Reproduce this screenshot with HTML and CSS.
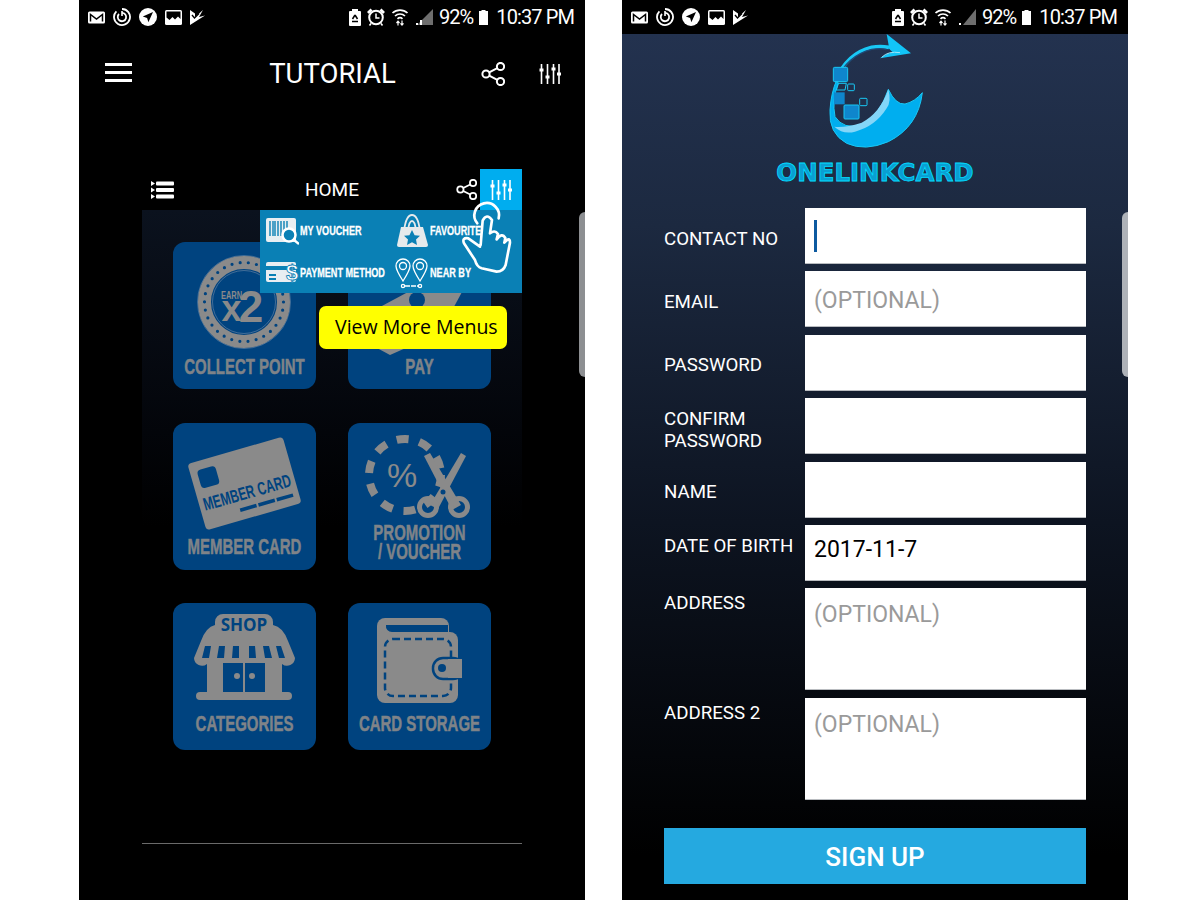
FILE: index.html
```html
<!DOCTYPE html>
<html lang="en">

<head>
    <meta charset="UTF-8">
    <meta name="viewport" content="width=device-width, initial-scale=1.0">
    <title>OneLinkCard</title>
    <link rel="stylesheet" href="styles.css">
</head>

<body>
    <svg class="defs" width="0" height="0">
        <symbol id="st-mail" viewBox="0 0 17 13">
            <rect x="0" y="0.5" width="17" height="12" rx="1.5" fill="#fff" />
            <path d="M2.5 10.5V3.5l6 4.5 6-4.5v7" fill="none" stroke="#000" stroke-width="1.5" />
        </symbol>
        <symbol id="st-ring" viewBox="0 0 18 18">
            <path d="M9 1a8 8 0 1 1-5.6 2.3" fill="none" stroke="#fff" stroke-width="1.8" />
            <path d="M9 4.8a4.2 4.2 0 1 1-3 1.2" fill="none" stroke="#fff" stroke-width="1.8" />
            <path d="M9 3v5" stroke="#fff" stroke-width="1.6" />
        </symbol>
        <symbol id="st-nav" viewBox="0 0 18 18">
            <circle cx="9" cy="9" r="9" fill="#fff" />
            <path d="M14 4 3.8 8.6l4.3 1.3 1.3 4.3z" fill="#000" />
        </symbol>
        <symbol id="st-image" viewBox="0 0 17 15">
            <rect x="0" y="0" width="17" height="15" rx="1.5" fill="#fff" />
            <path d="M1.5 1.5h14v7.5l-2.5-2.5-3 3-2.5-2.5-3 3-3-2.5z" fill="#000" />
        </symbol>
        <symbol id="st-check" viewBox="0 0 15 15">
            <path d="M0 0l5 3.5V7l3-2.5L13 0l-4 7 6-1.5L0 15z" fill="#fff" />
            <path d="M2 5l2.5 3L9 3.500" fill="none" stroke="#000" stroke-width="1.400" />
        </symbol>
        <symbol id="st-recycle" viewBox="0 0 12 17">
            <path d="M3 0h6v2h2a1 1 0 0 1 1 1v13a1 1 0 0 1-1 1H1a1 1 0 0 1-1-1V3a1 1 0 0 1 1-1h2z" fill="#fff" />
            <path d="M6 6 3.500 10M6 6l2.500 4M3 12.500h6" stroke="#000" stroke-width="1.500" fill="none" />
        </symbol>
        <symbol id="st-alarm" viewBox="0 0 18 18">
            <path d="M1 5 4.500 1.500M17 5l-3.500-3.500" stroke="#fff" stroke-width="2.800" />
            <circle cx="9" cy="9.500" r="6.800" fill="#000" stroke="#fff" stroke-width="2" />
            <path d="M9 5.500v4.500h3.500" fill="none" stroke="#fff" stroke-width="1.500" />
            <path d="M4 15.500 2.500 17.500M14 15.500l1.500 2" stroke="#fff" stroke-width="1.600" />
        </symbol>
        <symbol id="st-wifi" viewBox="0 0 18 18">
            <g fill="none" stroke="#fff" stroke-width="1.700">
                <path d="M1.500 5a11 11 0 0 1 15 0" />
                <path d="M4 8a7.200 7.200 0 0 1 10 0" />
                <path d="M6.500 10.800a3.600 3.600 0 0 1 5 0" />
            </g>
            <path d="M7 17.500v-4M5.500 15 7 13.200 8.500 15M11 12.500v4.500M9.500 15.300 11 17l1.500-1.700" fill="none" stroke="#fff" stroke-width="1.200" />
        </symbol>
        <symbol id="st-signal" viewBox="0 0 18 16">
            <path d="M18 0v16H2z" fill="#6e6e6e" />
            <path d="M1 16v-2h2v2zM5 16v-5h2v5z" fill="#fff" />
        </symbol>
        <symbol id="st-signal-off" viewBox="0 0 18 16">
            <path d="M18 0v16H5z" fill="#6e6e6e" />
            <path d="M1 16v-2h2v2z" fill="#fff" />
        </symbol>
        <symbol id="st-battery" viewBox="0 0 9 15">
            <path d="M2.500 0h4v1H9v14H0V1h2.500z" fill="#fff" />
        </symbol>
    </svg>

    <main class="page">
        <section class="phone phone-dark">
            <div class="status-bar">
                <div class="status-left">
                    <svg class="st-17"><use href="#st-mail" /></svg>
                    <svg class="st-18"><use href="#st-ring" /></svg>
                    <svg class="st-18"><use href="#st-nav" /></svg>
                    <svg class="st-17"><use href="#st-image" /></svg>
                    <svg class="st-15"><use href="#st-check" /></svg>
                </div>
                <div class="status-right">
                    <svg class="st-12"><use href="#st-recycle" /></svg>
                    <svg class="st-18"><use href="#st-alarm" /></svg>
                    <svg class="st-18"><use href="#st-wifi" /></svg>
                    <svg class="st-18"><use href="#st-signal" /></svg>
                    <span class="st-text">92%</span>
                    <svg class="st-9"><use href="#st-battery" /></svg>
                    <span class="st-text st-time">10:37 PM</span>
                </div>
            </div>

            <header class="top-bar">
                <div class="hamburger"><i></i><i></i><i></i></div>
                <h1 class="top-title">TUTORIAL</h1>
                <div class="top-actions">
                    <svg class="share-icon" viewBox="0 0 24 24">
                        <circle cx="5" cy="12" r="3.600" />
                        <circle cx="19.500" cy="4.500" r="3.600" />
                        <circle cx="19.500" cy="19.500" r="3.600" />
                        <path d="M8.200 10.300 16.300 6.200M8.200 13.700l8.100 4.100" />
                    </svg>
                    <svg class="sliders-icon" viewBox="0 0 22 20">
                        <path d="M2.500 0v20M8.500 0v20M14.500 0v20M20 0v20" />
                        <path class="knob" d="M.5 6h4M6.500 13h4M12.500 5h4M18 10h4" />
                    </svg>
                </div>
            </header>

            <div class="demo">
                <div class="demo-head">
                    <svg class="list-icon" viewBox="0 0 23 18">
                        <path d="M0 0l4 2.500L0 5zM0 6.500l4 2.500-4 2.500zM0 13l4 2.500L0 18z" fill="#fff" />
                        <rect x="5" y="0.500" width="18" height="4" rx="1" fill="#fff" />
                        <rect x="5" y="7" width="18" height="4" rx="1" fill="#fff" />
                        <rect x="5" y="13.500" width="18" height="4" rx="1" fill="#fff" />
                    </svg>
                    <div class="demo-title">HOME</div>
                    <div class="demo-actions">
                        <svg class="share-icon share-small" viewBox="0 0 24 24">
                            <circle cx="5" cy="12" r="3.600" />
                            <circle cx="19.500" cy="4.500" r="3.600" />
                            <circle cx="19.500" cy="19.500" r="3.600" />
                            <path d="M8.200 10.300 16.300 6.200M8.200 13.700l8.100 4.100" />
                        </svg>
                        <div class="menu-toggle">
                            <svg class="sliders-icon" viewBox="0 0 22 20">
                                <path d="M2.500 0v20M8.500 0v20M14.500 0v20M20 0v20" />
                                <path class="knob" d="M.5 6h4M6.500 13h4M12.500 5h4M18 10h4" />
                            </svg>
                        </div>
                    </div>
                </div>

                <div class="demo-body">
                    <div class="tiles">
                        <div class="tile">
                            <svg class="tile-icon" viewBox="0 0 143 115">
                                <circle cx="71" cy="60" r="46.500" class="hair" />
                                <circle cx="71" cy="60" r="39.500" class="ring" />
                                <circle cx="71" cy="60" r="39.500" class="ring-dots" />
                                <circle cx="71" cy="60" r="31.500" class="hair" />
                                <text transform="translate(58.500 57) scale(.75 1)" class="earn">EARN</text>
                                <text x="58.500" y="79" class="earn-x">x</text>
                                <text x="78" y="80" class="earn-two">2</text>
                            </svg>
                            <div class="tile-label">COLLECT POINT</div>
                        </div>
                        <div class="tile">
                            <svg class="tile-icon" viewBox="0 0 143 115">
                                <path d="M32 65 60 50h54L95 85l-35 20-18 8-13-7z" class="gray" />
                                <circle cx="69" cy="58" r="8" fill="#00437f" />
                            </svg>
                            <div class="tile-label">PAY</div>
                        </div>
                        <div class="tile">
                            <svg class="tile-icon tile-icon-card" viewBox="0 0 143 114">
                                <g transform="rotate(-16 71.500 60.500)">
                                    <rect x="22" y="26" width="99" height="69" rx="4" class="gray" />
                                    <rect x="29" y="35" width="19" height="19" rx="4" fill="#00437f" />
                                    <text transform="translate(71.500 76) scale(.66 1)" class="card-text">MEMBER CARD</text>
                                    <path d="M60 85h56" stroke="#00437f" stroke-width="3.500" stroke-dasharray="17 2" />
                                </g>
                            </svg>
                            <div class="tile-label">MEMBER CARD</div>
                        </div>
                        <div class="tile">
                            <svg class="tile-icon tile-icon-promo" viewBox="0 0 143 100">
                                <circle cx="57" cy="52" r="36" fill="none" stroke="#8a8a8a" stroke-width="8" stroke-dasharray="12 11" />
                                <text x="54" y="64" class="percent">%</text>
                                <path d="M76 33 82 30 113 82 104 87z" class="gray" />
                                <path d="M113 30 118 33 90 86 82 82z" class="gray" />
                                <circle cx="80" cy="84" r="8.500" fill="none" stroke="#8a8a8a" stroke-width="5" />
                                <circle cx="111" cy="84" r="8.500" fill="none" stroke="#8a8a8a" stroke-width="5" />
                                <circle cx="95" cy="69" r="2.500" fill="#00437f" />
                            </svg>
                            <div class="tile-label">PROMOTION</div>
                            <div class="tile-label">/ VOUCHER</div>
                        </div>
                        <div class="tile">
                            <svg class="tile-icon tile-icon-low" viewBox="0 0 143 111">
                                <path d="M50 11h42a8 8 0 0 1 8 8v3q10 2 15 16l7 17a8 8 0 0 1-13 6v29H34V61a8 8 0 0 1-13-6l7-17q5-14 14-16v-3a8 8 0 0 1 8-8z" class="gray" />
                                <g fill="#00437f">
                                    <path d="M32 43h6l-2 12h-7zM46 43h6l-1 12h-7zM60 43h6v12h-7zM76 43h6l1 12h-7zM90 43h6l3 12h-7zM103 43h5l4 12h-6z" />
                                    <rect x="50" y="60" width="20" height="29" />
                                    <rect x="72" y="60" width="20" height="29" />
                                </g>
                                <circle cx="64" cy="73" r="3" class="gray" />
                                <circle cx="79" cy="73" r="3" class="gray" />
                                <rect x="23" y="89" width="96" height="8" rx="4" class="gray" />
                                <text x="71" y="28" class="shop-text">SHOP</text>
                            </svg>
                            <div class="tile-label">CATEGORIES</div>
                        </div>
                        <div class="tile">
                            <svg class="tile-icon tile-icon-low" viewBox="0 0 143 111">
                                <rect x="29" y="15" width="72" height="40" rx="8" class="gray" />
                                <rect x="29" y="29" width="81" height="71" rx="8" class="gray" />
                                <path d="M38 22h62v7H44a6 6 0 0 1-6-7z" fill="#00437f" />
                                <rect x="37" y="36" width="66" height="57" rx="8" fill="none" stroke="#00437f" stroke-width="2.500" stroke-dasharray="7 4" />
                                <rect x="85" y="55" width="30" height="21" rx="10" class="gray" stroke="#00437f" stroke-width="2.500" />
                                <rect x="100" y="56" width="14" height="19" class="gray" />
                                <circle cx="94" cy="65" r="4" fill="#00437f" />
                            </svg>
                            <div class="tile-label">CARD STORAGE</div>
                        </div>
                    </div>
                </div>

                <div class="more-menu">
                    <div class="more-item">
                        <svg class="more-icon" viewBox="0 0 34 36">
                            <rect x="1" y="5" width="30" height="24" rx="2" fill="#e8eef2" />
                            <path d="M5 8v15M8 8v15M10 8v15M13 8v15M16 8v15M19 8v15M22 8v15" stroke="#0a80b5" stroke-width="1.400" />
                            <circle cx="24" cy="22" r="6.500" fill="#0a80b5" stroke="#fff" stroke-width="2.500" />
                            <path d="M29 27l5 4" stroke="#fff" stroke-width="2.500" />
                        </svg>
                        <span>MY VOUCHER</span>
                    </div>
                    <div class="more-item">
                        <svg class="more-icon" viewBox="0 0 34 36">
                            <path d="M6 14h22l5 18q0 2-2 2H4q-2 0-2-2z" fill="#e6eaec" />
                            <path d="M9 18q2-16 8-16t8 16M13 18q1-10 4-10t4 10" fill="none" stroke="#e6eaec" stroke-width="1.800" />
                            <path d="M17 17l2.600 5.200 5.400.6-4 3.800 1 5.400-5-2.700-5 2.700 1-5.400-4-3.800 5.400-.6z" fill="#0a80b5" />
                        </svg>
                        <span>FAVOURITE</span>
                    </div>
                    <div class="more-item">
                        <svg class="more-icon" viewBox="0 0 34 36">
                            <rect x="1" y="8" width="30" height="20" rx="2" fill="#e8eef2" />
                            <rect x="1" y="12" width="30" height="4" fill="#0a80b5" />
                            <rect x="4" y="20" width="7" height="2" fill="#0a80b5" />
                            <rect x="4" y="24" width="7" height="2" fill="#0a80b5" />
                            <text x="27" y="26" class="dollar">$</text>
                        </svg>
                        <span>PAYMENT METHOD</span>
                    </div>
                    <div class="more-item">
                        <svg class="more-icon" viewBox="0 0 34 36">
                            <g fill="none" stroke="#fff" stroke-width="1.300">
                                <path d="M8 5a7 7 0 0 1 7 7q0 4-7 15-7-11-7-15a7 7 0 0 1 7-7z" />
                                <circle cx="8" cy="12" r="3.500" />
                                <path d="M25 5a7 7 0 0 1 7 7q0 4-7 15-7-11-7-15a7 7 0 0 1 7-7z" />
                                <circle cx="25" cy="12" r="3.500" />
                                <circle cx="8" cy="32" r="1.600" />
                                <circle cx="25" cy="32" r="1.600" />
                                <path d="M10 32h13" stroke-dasharray="5 1" />
                            </g>
                        </svg>
                        <span>NEAR BY</span>
                    </div>
                </div>

                <div class="hint">View More Menus</div>

                <svg class="hand" viewBox="360 0 160 230">
                    <path d="M412 70A37 37 0 1 1 476 55" />
                    <path d="M422 135 428 62Q440 38 456 60L450 100Q464 88 474 102L470 118Q486 96 496 114L493 128Q510 108 510 128L497 195Q490 215 470 215L425 205Q410 200 405 180L372 130Q365 112 385 115L420 140" />
                </svg>
            </div>
            <div class="side-tab"></div>
        </section>

        <section class="phone phone-form">
            <div class="status-bar">
                <div class="status-left">
                    <svg class="st-17"><use href="#st-mail" /></svg>
                    <svg class="st-18"><use href="#st-ring" /></svg>
                    <svg class="st-18"><use href="#st-nav" /></svg>
                    <svg class="st-17"><use href="#st-image" /></svg>
                    <svg class="st-15"><use href="#st-check" /></svg>
                </div>
                <div class="status-right">
                    <svg class="st-12"><use href="#st-recycle" /></svg>
                    <svg class="st-18"><use href="#st-alarm" /></svg>
                    <svg class="st-18"><use href="#st-wifi" /></svg>
                    <svg class="st-18"><use href="#st-signal-off" /></svg>
                    <span class="st-text">92%</span>
                    <svg class="st-9"><use href="#st-battery" /></svg>
                    <span class="st-text st-time">10:37 PM</span>
                </div>
            </div>

            <div class="logo">
                <svg class="logo-mark" viewBox="160 12 300 348">
                    <path d="M350 178Q372 225 400 222 430 215 452 188 440 290 350 335 280 365 225 340 170 310 175 240 178 190 195 150L200 160Q180 210 190 260 215 300 270 285 325 255 350 178z" fill="#00aeef" stroke="#19c8f5" stroke-width="3" />
                    <path d="M350 178Q360 215 345 235 310 290 250 305 215 315 188 290 215 295 270 278 325 250 350 178z" fill="#84d6f8" />
                    <path d="M190 155Q225 70 300 52 325 48 352 52" fill="none" stroke="#19c8f5" stroke-width="11" />
                    <path d="M194 150Q228 76 300 58 325 54 345 58" fill="none" stroke="#1f4a78" stroke-width="4" />
                    <path d="M345 12 418 70 325 85Q345 68 365 68 345 52 352 52z" fill="#12c4f7" />
                    <path d="M330 82Q350 62 385 68" fill="none" stroke="#9ee6fb" stroke-width="3" />
                    <g fill="#0f86cc" stroke="#19c8f5" stroke-width="3">
                        <rect x="185" y="112" width="43" height="43" rx="4" />
                        <rect x="217" y="225" width="45" height="42" rx="3" />
                        <rect x="187" y="187" width="32" height="36" stroke="none" />
                    </g>
                    <g fill="none" stroke="#19c8f5" stroke-width="3">
                        <path d="M200 160h24l-4 20h-26z" />
                        <rect x="228" y="162" width="20" height="20" rx="3" />
                        <rect x="264" y="205" width="22" height="22" rx="3" />
                    </g>
                </svg>
                <div class="logo-text">ONELINKCARD</div>
            </div>

            <form class="signup-form">
                <label class="field-label">CONTACT NO</label>
                <div class="field"><span class="caret"></span></div>
                <label class="field-label">EMAIL</label>
                <input class="field field-hint" type="text" placeholder="(OPTIONAL)">
                <label class="field-label">PASSWORD</label>
                <input class="field" type="password">
                <label class="field-label field-label-two">CONFIRM PASSWORD</label>
                <input class="field" type="password">
                <label class="field-label">NAME</label>
                <input class="field" type="text">
                <label class="field-label field-label-dob">DATE OF BIRTH</label>
                <input class="field field-date" type="text" value="2017-11-7">
                <label class="field-label field-label-top">ADDRESS</label>
                <textarea class="field field-area" placeholder="(OPTIONAL)"></textarea>
                <label class="field-label field-label-top">ADDRESS 2</label>
                <textarea class="field field-area" placeholder="(OPTIONAL)"></textarea>
                <button class="signup-btn" type="button">SIGN UP</button>
            </form>
            <div class="side-tab side-tab-light"></div>
        </section>
    </main>
</body>

</html>
```

FILE: styles.css
```css
* {
    box-sizing: border-box;
}

body {
    margin: 0;
    background-color: #fff;
    font-family: Roboto, "Liberation Sans", sans-serif;
}

.defs {
    position: absolute;
}

.page {
    display: flex;
    gap: 37px;
    padding-left: 79px;
}

.phone {
    position: relative;
    width: 506px;
    height: 900px;
    overflow: hidden;
    color: #fff;
}

.phone-dark {
    background-color: #000;
}

.phone-form {
    background: linear-gradient(#23324f 34px, #1c2940 25%, #0d1421 58%, #000 95%);
}

.side-tab {
    position: absolute;
    right: 0;
    top: 212px;
    width: 6px;
    height: 165px;
    background-color: #8d8f92;
    border-radius: 6px 0 0 6px;
}

.side-tab-light {
    background-color: #aeb2b8;
}

/* status bar */
.status-bar {
    display: flex;
    justify-content: space-between;
    align-items: center;
    height: 34px;
    padding: 0 11px 0 9px;
    background-color: #000;
}

.status-left,
.status-right {
    display: flex;
    align-items: center;
    gap: 8px;
}

.status-right {
    gap: 6px;
}

.st-9 { width: 9px; height: 15px; }
.st-12 { width: 12px; height: 17px; }
.st-15 { width: 15px; height: 15px; }
.st-17 { width: 17px; height: 15px; }
.st-18 { width: 18px; height: 18px; }

.st-text {
    font-size: 20px;
    letter-spacing: -0.9px;
    white-space: nowrap;
}

.st-time {
    margin-left: 2px;
}

/* left phone */
.top-bar {
    display: grid;
    grid-template-columns: 1fr auto 1fr;
    align-items: center;
    height: 80px;
    padding: 0 24px 0 26px;
}

.hamburger {
    display: flex;
    flex-direction: column;
    gap: 5px;
    width: 27px;
    margin-bottom: 3px;
}

.hamburger i {
    display: block;
    height: 3px;
    background-color: #fff;
}

.top-title {
    margin: 0 1px 2px 0;
    font-size: 27.500px;
    font-weight: 400;
}

.top-actions {
    display: flex;
    justify-content: flex-end;
    align-items: center;
    gap: 34px;
}

.share-icon {
    width: 24px;
    height: 24px;
    fill: none;
    stroke: #fff;
    stroke-width: 2;
}

.share-small {
    width: 21px;
    height: 21px;
}

.sliders-icon {
    width: 22px;
    height: 20px;
    fill: none;
    stroke: #fff;
    stroke-width: 1.600;
}

.sliders-icon .knob {
    stroke-width: 3;
}

.demo {
    position: relative;
    width: 380px;
    margin: 55px 0 0 63px;
}

.demo-head {
    display: grid;
    grid-template-columns: 1fr auto 1fr;
    align-items: center;
    height: 41px;
}

.list-icon {
    width: 23px;
    height: 18px;
    margin-left: 9px;
}

.demo-title {
    font-size: 19px;
}

.demo-actions {
    display: flex;
    justify-content: flex-end;
    align-items: center;
    gap: 3px;
}

.menu-toggle {
    display: flex;
    align-items: center;
    justify-content: center;
    width: 42px;
    height: 41px;
    background-color: #00adef;
}

.demo-body {
    height: 634px;
    padding: 32px 31px 0;
    background: linear-gradient(#0b121e, #03050a 35%, #000 50%);
    border-bottom: 1px solid #6a6a6a;
}

.tiles {
    display: grid;
    grid-template-columns: 143px 143px;
    grid-auto-rows: 147px;
    column-gap: 32px;
    row-gap: 33.500px;
}

.tile {
    background-color: #00437f;
    border-radius: 12px;
}

.tile-icon {
    display: block;
    width: 143px;
    height: 115px;
}

.tile-icon-card {
    height: 114px;
}

.tile-icon-low {
    height: 111px;
}

.tile-icon-promo {
    height: 100px;
}

/* wider box, then squeezed around its centre: the labels are a condensed poster face */
.tile-label {
    width: 203px;
    margin-left: -30px;
    font-family: "Liberation Sans", sans-serif;
    font-size: 22px;
    font-weight: 700;
    line-height: 19px;
    text-align: center;
    white-space: nowrap;
    color: #7f8388;
    -webkit-text-stroke: 0.5px #7f8388;
    transform: scaleX(0.68);
}

.gray {
    fill: #8a8a8a;
}

.hair {
    fill: none;
    stroke: #6f8aa8;
    stroke-width: 0.600;
}

.ring {
    fill: none;
    stroke: #8a8a8a;
    stroke-width: 13;
}

.ring-dots {
    fill: none;
    stroke: #00437f;
    stroke-width: 3.200;
    stroke-linecap: round;
    stroke-dasharray: 0 8.270;
}

.earn {
    font-family: "Liberation Sans", sans-serif;
    font-size: 10px;
    font-weight: 700;
    text-anchor: middle;
    fill: #8a8a8a;
}

.earn-x {
    font-family: "Liberation Sans", sans-serif;
    font-size: 36px;
    font-weight: 700;
    text-anchor: middle;
    fill: #8a8a8a;
}

.earn-two {
    font-family: "Liberation Sans", sans-serif;
    font-size: 44px;
    font-weight: 700;
    text-anchor: middle;
    fill: #8a8a8a;
}

.card-text {
    font-family: "Liberation Sans", sans-serif;
    font-size: 18px;
    font-weight: 700;
    text-anchor: middle;
    fill: #00437f;
}

.percent {
    font-family: "Liberation Sans", sans-serif;
    font-size: 34px;
    text-anchor: middle;
    fill: #8a8a8a;
}

.shop-text {
    font-family: "Open Sans", sans-serif;
    font-size: 17px;
    font-weight: 700;
    text-anchor: middle;
    fill: #00437f;
}

.more-menu {
    position: absolute;
    left: 118px;
    top: 41px;
    display: grid;
    grid-template-columns: 130px 132px;
    grid-auto-rows: 41.500px;
    width: 262px;
    height: 83px;
    background-color: #0a80b5;
}

.more-item {
    display: flex;
    align-items: center;
    gap: 1px;
    padding-left: 5px;
    font-family: "Liberation Sans", sans-serif;
    font-size: 13px;
    font-weight: 700;
    white-space: nowrap;
}

.more-item span {
    display: inline-block;
    -webkit-text-stroke: 0.3px #fff;
    transform: scaleX(0.7);
    transform-origin: left center;
}

.more-icon {
    flex: none;
    width: 34px;
    height: 36px;
}

.dollar {
    font-family: "Liberation Sans", sans-serif;
    font-size: 22px;
    font-weight: 700;
    text-anchor: middle;
    fill: #fff;
    stroke: #0a80b5;
    stroke-width: 0.800;
}

.hint {
    position: absolute;
    left: 177px;
    top: 137px;
    display: flex;
    align-items: center;
    width: 188px;
    height: 43px;
    padding: 0 0 2px 16px;
    background-color: #ff0;
    border-radius: 7px;
    font-family: "Open Sans", sans-serif;
    font-size: 19.500px;
    color: #000;
    white-space: nowrap;
}

.hand {
    position: absolute;
    left: 318px;
    top: 31px;
    width: 53.300px;
    height: 76.700px;
    fill: none;
    stroke: #fff;
    stroke-width: 8;
    stroke-linejoin: round;
    stroke-linecap: round;
}

/* right phone */
.logo {
    display: flex;
    flex-direction: column;
    align-items: center;
}

.logo-mark {
    display: block;
    width: 100px;
    height: 116px;
}

.logo-text {
    margin-top: 10px;
    font-family: "DejaVu Sans", sans-serif;
    font-size: 24.500px;
    font-weight: 700;
    line-height: 26px;
    color: #0a9fd2;
    -webkit-text-stroke: 0.8px #00dcff;
}

.signup-form {
    display: grid;
    grid-template-columns: 141px 281px;
    grid-template-rows: repeat(6, 56px) 102px 102px auto;
    row-gap: 7.400px;
    position: absolute;
    top: 208px;
    left: 42px;
}

.field-label {
    align-self: center;
    padding-top: 5px;
    font-size: 18.700px;
    line-height: 22px;
    color: #fff;
    white-space: nowrap;
}

.field-label-two {
    padding-top: 8px;
    width: 110px;
    white-space: normal;
}

.field-label-dob {
    align-self: start;
    padding-top: 10px;
}

.field-label-top {
    align-self: start;
    padding-top: 4px;
}

.field {
    display: block;
    width: 281px;
    height: 100%;
    padding: 0 9px;
    background-color: #fff;
    border: 0;
    border-radius: 0;
    border-bottom: 1px solid #b9bcc0;
    outline: none;
    font-family: Roboto, sans-serif;
    font-size: 23px;
    color: #000;
    resize: none;
}

.field::placeholder {
    color: #9a9a9a;
    opacity: 1;
}

.field-hint {
    padding-top: 3px;
}

.field-date {
    padding-bottom: 6px;
}

.field-area {
    padding-top: 13px;
    line-height: 27px;
}

.caret {
    display: block;
    width: 3px;
    height: 32px;
    position: relative;
    top: 12px;
    background-color: #0d5aa0;
}

.signup-btn {
    grid-column: 1 / 3;
    height: 56px;
    margin-top: 20.600px;
    padding-top: 3px;
    background-color: #25a9e0;
    border: 0;
    border-radius: 0;
    font-family: Roboto, sans-serif;
    font-size: 26px;
    font-weight: 500;
    color: #fff;
}
```
